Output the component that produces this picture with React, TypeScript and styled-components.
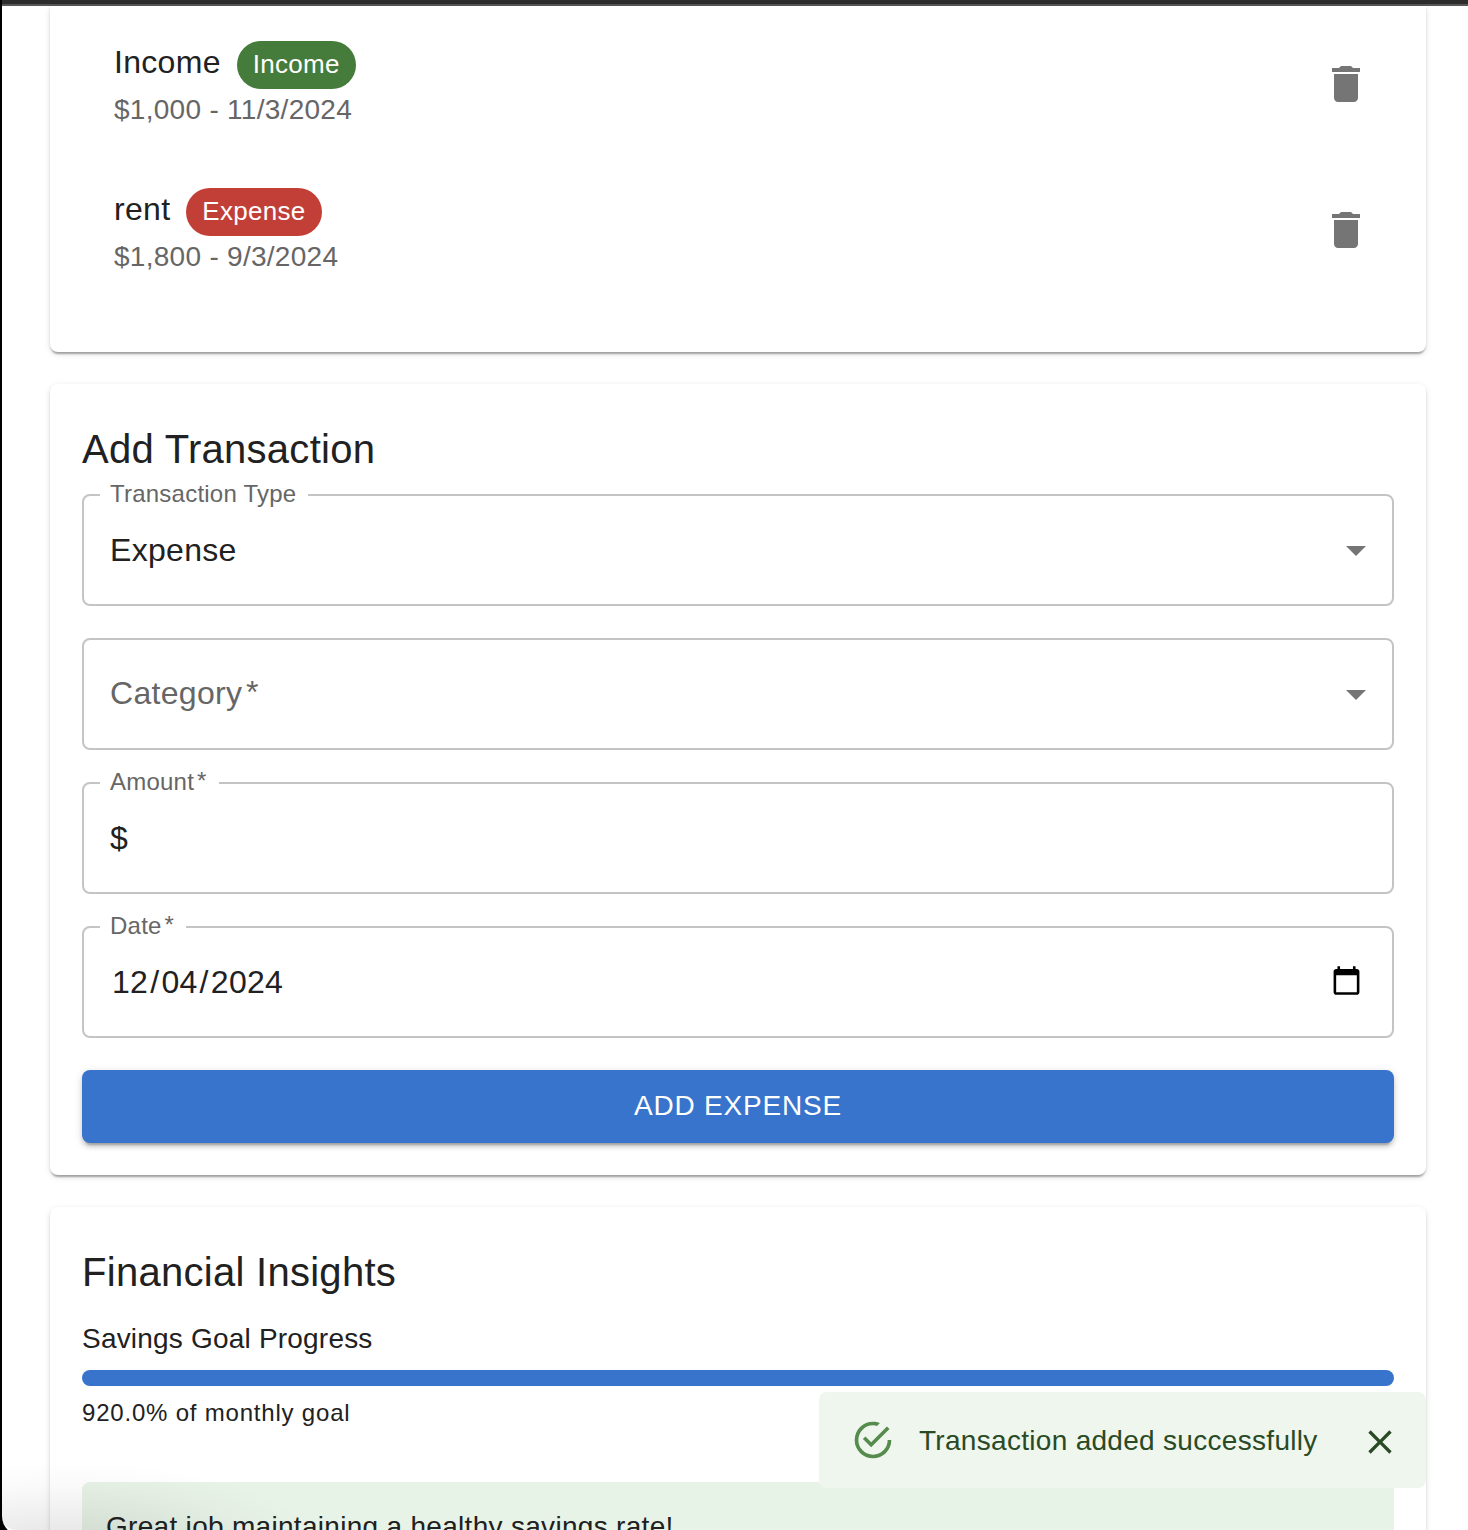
import React from 'react';
import styled, { createGlobalStyle } from 'styled-components';

const GlobalStyle = createGlobalStyle`
  *, *::before, *::after { box-sizing: border-box; }
  body { margin: 0; background: #000; }
`;

const Screen = styled.div`
  position: relative;
  width: 1468px;
  height: 1530px;
  overflow: hidden;
  background: #000;
  padding-left: 2px;
  font-family: 'Liberation Sans', Helvetica, Arial, sans-serif;
  color: #212121;
`;

const Window = styled.div`
  height: 1536px;
  border-radius: 0 0 0 20px;
  overflow: hidden;
  background: #fff;
`;

const TitleBar = styled.div`
  height: 6px;
  background: #2c2c2c;
  border-bottom: 2px solid #575556;
`;

const Content = styled.main`
  display: flex;
  flex-direction: column;
  gap: 32px;
  padding: 0 42px 0 48px;
`;

const Card = styled.section<{ $cut?: boolean }>`
  padding: ${(p) => (p.$cut ? '4px 32px 48px' : '32px')};
  border-radius: ${(p) => (p.$cut ? '0 0 8px 8px' : '8px')};
  background: #fff;
  box-shadow:
    0 4px 2px -2px rgba(0, 0, 0, 0.2),
    0 2px 2px 0 rgba(0, 0, 0, 0.14),
    0 2px 6px 0 rgba(0, 0, 0, 0.12);
`;

const Row = styled.div`
  display: flex;
  align-items: flex-start;
  justify-content: space-between;
  height: 147px;
  padding: 28px 24px 0 32px;
`;

const Primary = styled.div`
  display: flex;
  align-items: flex-start;
  gap: 16px;
  height: 52px;
  font-size: 32px;
  line-height: 48px;
  letter-spacing: 0.3px;
`;

const Chip = styled.span<{ $kind: string }>`
  height: 48px;
  margin-top: 3px;
  padding: 0 16px;
  border-radius: 24px;
  background: ${(p) => (p.$kind === 'Income' ? '#457b3b' : '#c23f38')};
  color: #fff;
  font-size: 26px;
  line-height: 46px;
  letter-spacing: 0.3px;
`;

const Secondary = styled.div`
  font-size: 28px;
  line-height: 40px;
  letter-spacing: 0.28px;
  color: #666;
`;

const IconBox = styled.svg<{ $size: number; $color: string }>`
  display: block;
  flex: none;
  width: ${(p) => p.$size}px;
  height: ${(p) => p.$size}px;
  fill: ${(p) => p.$color};
`;

const DeleteIcon = styled(IconBox)`
  margin-top: 22px;

  ${Row} + ${Row} & {
    margin-top: 21px;
  }
`;

const Title = styled.h2`
  margin: 0 0 13px;
  padding-top: 1px;
  font-size: 40px;
  font-weight: 400;
  line-height: 64px;
  letter-spacing: 0.28px;
`;

const Form = styled.form`
  display: flex;
  flex-direction: column;
  gap: 32px;
`;

const Field = styled.div`
  position: relative;
  display: flex;
  align-items: center;
  justify-content: space-between;
  height: 112px;
  padding: 0 12px 0 26px;
  border: 2px solid #c4c4c4;
  border-radius: 8px;
`;

const Label = styled.label`
  position: absolute;
  left: 16px;
  top: -15px;
  padding: 0 12px 0 10px;
  background: #fff;
  color: #666;
  font-size: 24px;
  line-height: 26px;
  letter-spacing: 0.225px;
  white-space: nowrap;
`;

const Star = styled.span`
  display: inline-block;
  line-height: 1;
  margin-left: -0.09em;
  transform: translateY(-0.03em);
`;

const Value = styled.span<{ $muted?: boolean }>`
  font-size: 32px;
  line-height: 46px;
  letter-spacing: 0.3px;
  color: ${(p) => (p.$muted ? '#666' : '#212121')};
  padding-bottom: ${(p) => (p.$muted ? '2px' : '0')};
`;

const DatePart = styled.span`
  padding: 0 2px;
`;

const CalendarIcon = styled(IconBox)`
  margin: 0 18.5px 2.5px 0;
`;

const Submit = styled.button`
  height: 73px;
  padding: 11px 32px 13px;
  border: 0;
  border-radius: 8px;
  background: #3874cb;
  color: #fff;
  font-family: inherit;
  font-size: 28px;
  line-height: 49px;
  letter-spacing: 0.8px;
  text-transform: uppercase;
  box-shadow:
    0 6px 2px -4px rgba(0, 0, 0, 0.2),
    0 4px 4px 0 rgba(0, 0, 0, 0.14),
    0 2px 10px 0 rgba(0, 0, 0, 0.12);
`;

const Subtitle = styled.div`
  font-size: 28px;
  line-height: 44px;
  letter-spacing: 0.2px;
  margin-bottom: 9px;
`;

const Progress = styled.div`
  height: 16px;
  border-radius: 8px;
  background: #3874cb;
`;

const Caption = styled.div`
  margin: 7px 0 49px;
  font-size: 24px;
  line-height: 40px;
  letter-spacing: 0.8px;
`;

const Insight = styled.div`
  padding: 25px 24px 23px;
  border-radius: 8px;
  background: #e8f3e7;
  font-size: 28px;
  line-height: 40px;
  letter-spacing: 0.3px;
`;

const CornerShade = styled.div`
  position: absolute;
  left: 2px;
  bottom: 0;
  width: 360px;
  height: 90px;
  pointer-events: none;
  background: radial-gradient(ellipse 270px 100px at 60px 120px, rgba(0, 0, 0, 0.11), rgba(0, 0, 0, 0.085) 30%, rgba(0, 0, 0, 0.02) 75%, rgba(0, 0, 0, 0));
  border-radius: 0 0 0 14px;
`;

const Toast = styled.div`
  position: absolute;
  right: 42px;
  bottom: 42px;
  display: flex;
  align-items: center;
  width: 607px;
  height: 96px;
  padding: 0 26px 0 32px;
  border-radius: 8px;
  background: #eff6ee;
  color: #294a25;
`;

const ToastText = styled.span`
  flex: 1;
  margin-left: 24px;
  padding-top: 2px;
  font-size: 28px;
  line-height: 40px;
  letter-spacing: 0.3px;
  white-space: nowrap;
`;

const CloseIcon = styled(IconBox)`
  margin-top: 4px;
`;

const transactions = [
  { name: 'Income', kind: 'Income', detail: '$1,000 - 11/3/2024' },
  { name: 'rent', kind: 'Expense', detail: '$1,800 - 9/3/2024' },
];

const DropArrow = () => (
  <IconBox $size={48} $color="#757575" viewBox="0 0 24 24">
    <path d="M7 10l5 5 5-5z" />
  </IconBox>
);

const Required = () => (
  <>
    {'\u2009'}
    <Star>*</Star>
  </>
);

export default function App() {
  return (
    <Screen>
      <GlobalStyle />
      <Window>
        <TitleBar />
        <Content>
          <Card $cut>
            {transactions.map((t) => (
              <Row key={t.name}>
                <div>
                  <Primary>
                    <span>{t.name}</span>
                    <Chip $kind={t.kind}>{t.kind}</Chip>
                  </Primary>
                  <Secondary>{t.detail}</Secondary>
                </div>
                <DeleteIcon $size={48} $color="#757575" viewBox="0 0 24 24">
                  <path d="M6 19c0 1.1.9 2 2 2h8c1.1 0 2-.9 2-2V7H6v12zM19 4h-3.5l-1-1h-5l-1 1H5v2h14V4z" />
                </DeleteIcon>
              </Row>
            ))}
          </Card>

          <Card>
            <Title>Add Transaction</Title>
            <Form>
              <Field>
                <Label>Transaction Type</Label>
                <Value>Expense</Value>
                <DropArrow />
              </Field>
              <Field>
                <Value $muted>Category<Required /></Value>
                <DropArrow />
              </Field>
              <Field>
                <Label>Amount<Required /></Label>
                <Value>$</Value>
              </Field>
              <Field>
                <Label>Date<Required /></Label>
                <Value>
                  <DatePart>12</DatePart>/<DatePart>04</DatePart>/<DatePart>2024</DatePart>
                </Value>
                <CalendarIcon $size={31} $color="#000" viewBox="0 0 24 24">
                  <path d="M20 3h-1V1h-2v2H7V1H5v2H4c-1.1 0-2 .9-2 2v16c0 1.1.9 2 2 2h16c1.1 0 2-.9 2-2V5c0-1.1-.9-2-2-2zm0 18H4V8h16v13z" />
                </CalendarIcon>
              </Field>
              <Submit type="button">Add Expense</Submit>
            </Form>
          </Card>

          <Card>
            <Title>Financial Insights</Title>
            <Subtitle>Savings Goal Progress</Subtitle>
            <Progress />
            <Caption>920.0% of monthly goal</Caption>
            <Insight>Great job maintaining a healthy savings rate!</Insight>
          </Card>
        </Content>
      </Window>
      <CornerShade />
      <Toast>
        <IconBox $size={44} $color="#558b4c" viewBox="0 0 24 24">
          <path d="M20,12A8,8 0 0,1 12,20A8,8 0 0,1 4,12A8,8 0 0,1 12,4C12.76,4 13.5,4.11 14.2,4.31L15.77,2.74C14.61,2.26 13.34,2 12,2A10,10 0 0,0 2,12A10,10 0 0,0 12,22A10,10 0 0,0 22,12M7.91,10.08L6.5,11.5L11,16L21,6L19.59,4.58L11,13.17L7.91,10.08Z" />
        </IconBox>
        <ToastText>Transaction added successfully</ToastText>
        <CloseIcon $size={40} $color="#294a25" viewBox="0 0 24 24">
          <path d="M19 6.41L17.59 5 12 10.59 6.41 5 5 6.41 10.59 12 5 17.59 6.41 19 12 13.41 17.59 19 19 17.59 13.41 12z" />
        </CloseIcon>
      </Toast>
    </Screen>
  );
}
